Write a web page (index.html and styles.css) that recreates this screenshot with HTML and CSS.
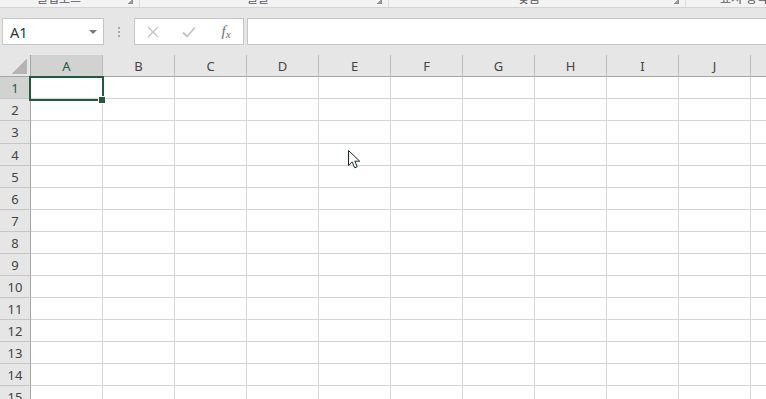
FILE: index.html
```html
<!DOCTYPE html>
<html lang="ko">
<head>
<meta charset="utf-8">
<title>Excel</title>
<link rel="stylesheet" href="styles.css">
</head>
<body>
<div class="ribbon">
  <div class="group g1"><span class="glabel">클립보드</span><span class="launch"></span></div>
  <div class="group g2"><span class="glabel">글꼴</span><span class="launch"></span></div>
  <div class="group g3"><span class="glabel">맞춤</span><span class="launch"></span></div>
  <div class="group g4"><span class="glabel">표시 형식</span></div>
</div>

<div class="formula-row">
  <div class="namebox"><span class="ref">A1</span><span class="caret"></span></div>
  <div class="dots"><i></i><i></i><i></i></div>
  <div class="fbtns">
    <span class="fbtn"><svg width="12" height="12" viewBox="0 0 12 12"><path d="M1 1L11 11M11 1L1 11" stroke="#c4c4c4" stroke-width="1.3" fill="none"/></svg></span>
    <span class="fbtn"><svg width="14" height="12" viewBox="0 0 14 12"><path d="M1 6.5L5 10.5L13 1.5" stroke="#c4c4c4" stroke-width="1.8" fill="none"/></svg></span>
    <span class="fbtn fx"><span class="f">f</span><span class="x">x</span></span>
  </div>
  <div class="finput"></div>
</div>

<div class="sheet">
  <div class="corner"><span class="tri"></span></div>
  <div class="ch sel-h">A</div><div class="ch">B</div><div class="ch">C</div><div class="ch">D</div><div class="ch">E</div><div class="ch">F</div><div class="ch">G</div><div class="ch">H</div><div class="ch">I</div><div class="ch">J</div><div class="ch"></div>

  <div class="rh sel-h">1</div><div class="c active"><span class="selbox"></span><span class="handle"></span></div><div class="c"></div><div class="c"></div><div class="c"></div><div class="c"></div><div class="c"></div><div class="c"></div><div class="c"></div><div class="c"></div><div class="c"></div><div class="c"></div>
  <div class="rh">2</div><div class="c"></div><div class="c"></div><div class="c"></div><div class="c"></div><div class="c"></div><div class="c"></div><div class="c"></div><div class="c"></div><div class="c"></div><div class="c"></div><div class="c"></div>
  <div class="rh">3</div><div class="c"></div><div class="c"></div><div class="c"></div><div class="c"></div><div class="c"></div><div class="c"></div><div class="c"></div><div class="c"></div><div class="c"></div><div class="c"></div><div class="c"></div>
  <div class="rh">4</div><div class="c"></div><div class="c"></div><div class="c"></div><div class="c"></div><div class="c"></div><div class="c"></div><div class="c"></div><div class="c"></div><div class="c"></div><div class="c"></div><div class="c"></div>
  <div class="rh">5</div><div class="c"></div><div class="c"></div><div class="c"></div><div class="c"></div><div class="c"></div><div class="c"></div><div class="c"></div><div class="c"></div><div class="c"></div><div class="c"></div><div class="c"></div>
  <div class="rh">6</div><div class="c"></div><div class="c"></div><div class="c"></div><div class="c"></div><div class="c"></div><div class="c"></div><div class="c"></div><div class="c"></div><div class="c"></div><div class="c"></div><div class="c"></div>
  <div class="rh">7</div><div class="c"></div><div class="c"></div><div class="c"></div><div class="c"></div><div class="c"></div><div class="c"></div><div class="c"></div><div class="c"></div><div class="c"></div><div class="c"></div><div class="c"></div>
  <div class="rh">8</div><div class="c"></div><div class="c"></div><div class="c"></div><div class="c"></div><div class="c"></div><div class="c"></div><div class="c"></div><div class="c"></div><div class="c"></div><div class="c"></div><div class="c"></div>
  <div class="rh">9</div><div class="c"></div><div class="c"></div><div class="c"></div><div class="c"></div><div class="c"></div><div class="c"></div><div class="c"></div><div class="c"></div><div class="c"></div><div class="c"></div><div class="c"></div>
  <div class="rh">10</div><div class="c"></div><div class="c"></div><div class="c"></div><div class="c"></div><div class="c"></div><div class="c"></div><div class="c"></div><div class="c"></div><div class="c"></div><div class="c"></div><div class="c"></div>
  <div class="rh">11</div><div class="c"></div><div class="c"></div><div class="c"></div><div class="c"></div><div class="c"></div><div class="c"></div><div class="c"></div><div class="c"></div><div class="c"></div><div class="c"></div><div class="c"></div>
  <div class="rh">12</div><div class="c"></div><div class="c"></div><div class="c"></div><div class="c"></div><div class="c"></div><div class="c"></div><div class="c"></div><div class="c"></div><div class="c"></div><div class="c"></div><div class="c"></div>
  <div class="rh">13</div><div class="c"></div><div class="c"></div><div class="c"></div><div class="c"></div><div class="c"></div><div class="c"></div><div class="c"></div><div class="c"></div><div class="c"></div><div class="c"></div><div class="c"></div>
  <div class="rh">14</div><div class="c"></div><div class="c"></div><div class="c"></div><div class="c"></div><div class="c"></div><div class="c"></div><div class="c"></div><div class="c"></div><div class="c"></div><div class="c"></div><div class="c"></div>
  <div class="rh">15</div><div class="c"></div><div class="c"></div><div class="c"></div><div class="c"></div><div class="c"></div><div class="c"></div><div class="c"></div><div class="c"></div><div class="c"></div><div class="c"></div><div class="c"></div>
</div>

<svg class="cursor" width="14" height="20" viewBox="0 0 14 20"><path d="M0.5 0.5L0.5 15.5L4.2 12L6.7 17.8L9.2 16.7L6.8 11.2L11.7 11.2Z" fill="#fff" stroke="#1b2a24" stroke-width="1" stroke-linejoin="miter"/></svg>
</body>
</html>
```

FILE: styles.css
```css
* { box-sizing: border-box; }
html, body { margin: 0; padding: 0; }
body {
  width: 766px;
  height: 399px;
  overflow: hidden;
  background: #e6e6e6;
  font-family: "Noto Sans", "Open Sans", "Noto Sans CJK KR", sans-serif;
  color: #444;
  position: relative;
}

/* ribbon strip */
.ribbon {
  height: 8px;
  background: #f3f3f3;
  border-bottom: 1px solid #d4d4d4;
  display: flex;
  overflow: hidden;
}
.group {
  position: relative;
  height: 7px;
  border-right: 1px solid #dcdcdc;
  overflow: hidden;
}
.g1 { width: 140px; }
.g2 { width: 249px; }
.g3 { width: 297px; }
.g4 { flex: 1; border-right: 0; }
.glabel {
  display: block;
  font-family: "Noto Sans CJK KR", sans-serif;
  font-size: 12px;
  line-height: 12px;
  margin-top: -8px;
  color: #5e5a66;
  white-space: nowrap;
}
.g1 .glabel { padding-left: 37px; }
.g2 .glabel { padding-left: 107px; }
.g3 .glabel { padding-left: 129px; }
.g4 .glabel { padding-left: 34px; }
.launch {
  position: absolute;
  right: 6px;
  top: 0;
  width: 5px;
  height: 4px;
  border-right: 1px solid #8a8a8a;
  border-bottom: 1px solid #8a8a8a;
  background: linear-gradient(135deg, transparent 50%, #a0a0a0 50%);
}

/* formula row */
.formula-row {
  display: flex;
  height: 27px;
  margin-top: 10px;
  margin-bottom: 10px;
}
.namebox {
  position: relative;
  margin-left: 2px;
  width: 102px;
  background: #fff;
  border: 1px solid #c6c6c6;
  display: flex;
  align-items: center;
}
.ref {
  font-size: 14.5px;
  color: #333;
  padding-left: 7px;
}
.caret {
  position: absolute;
  right: 6px;
  top: 11px;
  width: 0;
  height: 0;
  border-left: 4px solid transparent;
  border-right: 4px solid transparent;
  border-top: 4px solid #7a7a7a;
}
.dots {
  width: 30px;
  display: flex;
  flex-direction: column;
  align-items: center;
  justify-content: center;
  gap: 2px;
  padding-right: 1px;
}
.dots i {
  display: block;
  width: 2px;
  height: 2px;
  background: #a9a9a9;
}
.fbtns {
  width: 110px;
  background: #fff;
  border: 1px solid #c6c6c6;
  display: flex;
}
.fbtn {
  width: 36px;
  display: flex;
  align-items: center;
  justify-content: center;
}
.fx {
  font-family: "Liberation Serif", serif;
  font-style: italic;
  color: #6e6e6e;
  padding-left: 2px;
}
.fx .f { font-size: 15px; }
.fx .x { font-size: 11px; margin-top: 4px; }
.finput {
  flex: 1;
  margin-left: 3px;
  margin-right: -2px;
  background: #fff;
  border: 1px solid #c6c6c6;
}

/* sheet grid */
.sheet {
  display: grid;
  grid-template-columns: 31px repeat(11, 72px);
  grid-template-rows: 22px 22px 22px 23px;
  grid-auto-rows: 22px;
  background: #fff;
}
.corner {
  position: relative;
  background: #e6e6e6;
  border-right: 1px solid #a5a5a5;
  border-bottom: 1px solid #a5a5a5;
}
.tri {
  position: absolute;
  right: 3px;
  bottom: 2px;
  width: 15px;
  height: 15px;
  background: linear-gradient(135deg, transparent 50%, #b5b5b5 50%);
}
.ch {
  background: #e6e6e6;
  border-right: 1px solid #bdbdbd;
  border-bottom: 1px solid #a5a5a5;
  font-size: 13px;
  line-height: 22px;
  text-align: center;
  color: #444;
}
.rh {
  background: #e6e6e6;
  border-right: 1px solid #a5a5a5;
  border-bottom: 1px solid #c6c6c6;
  font-size: 13px;
  line-height: 22px;
  text-align: center;
  color: #444;
}
.sel-h {
  background: #d2d2d2;
  color: #215c3b;
}
.c {
  border-right: 1px solid #d4d4d4;
  border-bottom: 1px solid #d4d4d4;
}
.active { position: relative; }
.selbox {
  position: absolute;
  left: -2px;
  top: -1px;
  width: 75px;
  height: 25px;
  border: 2px solid #1f5c3b;
}
.handle {
  position: absolute;
  left: 67px;
  top: 19px;
  width: 8px;
  height: 8px;
  background: #1f5c3b;
  border: 1px solid #fff;
}

.cursor {
  position: absolute;
  left: 348px;
  top: 150px;
}
```
